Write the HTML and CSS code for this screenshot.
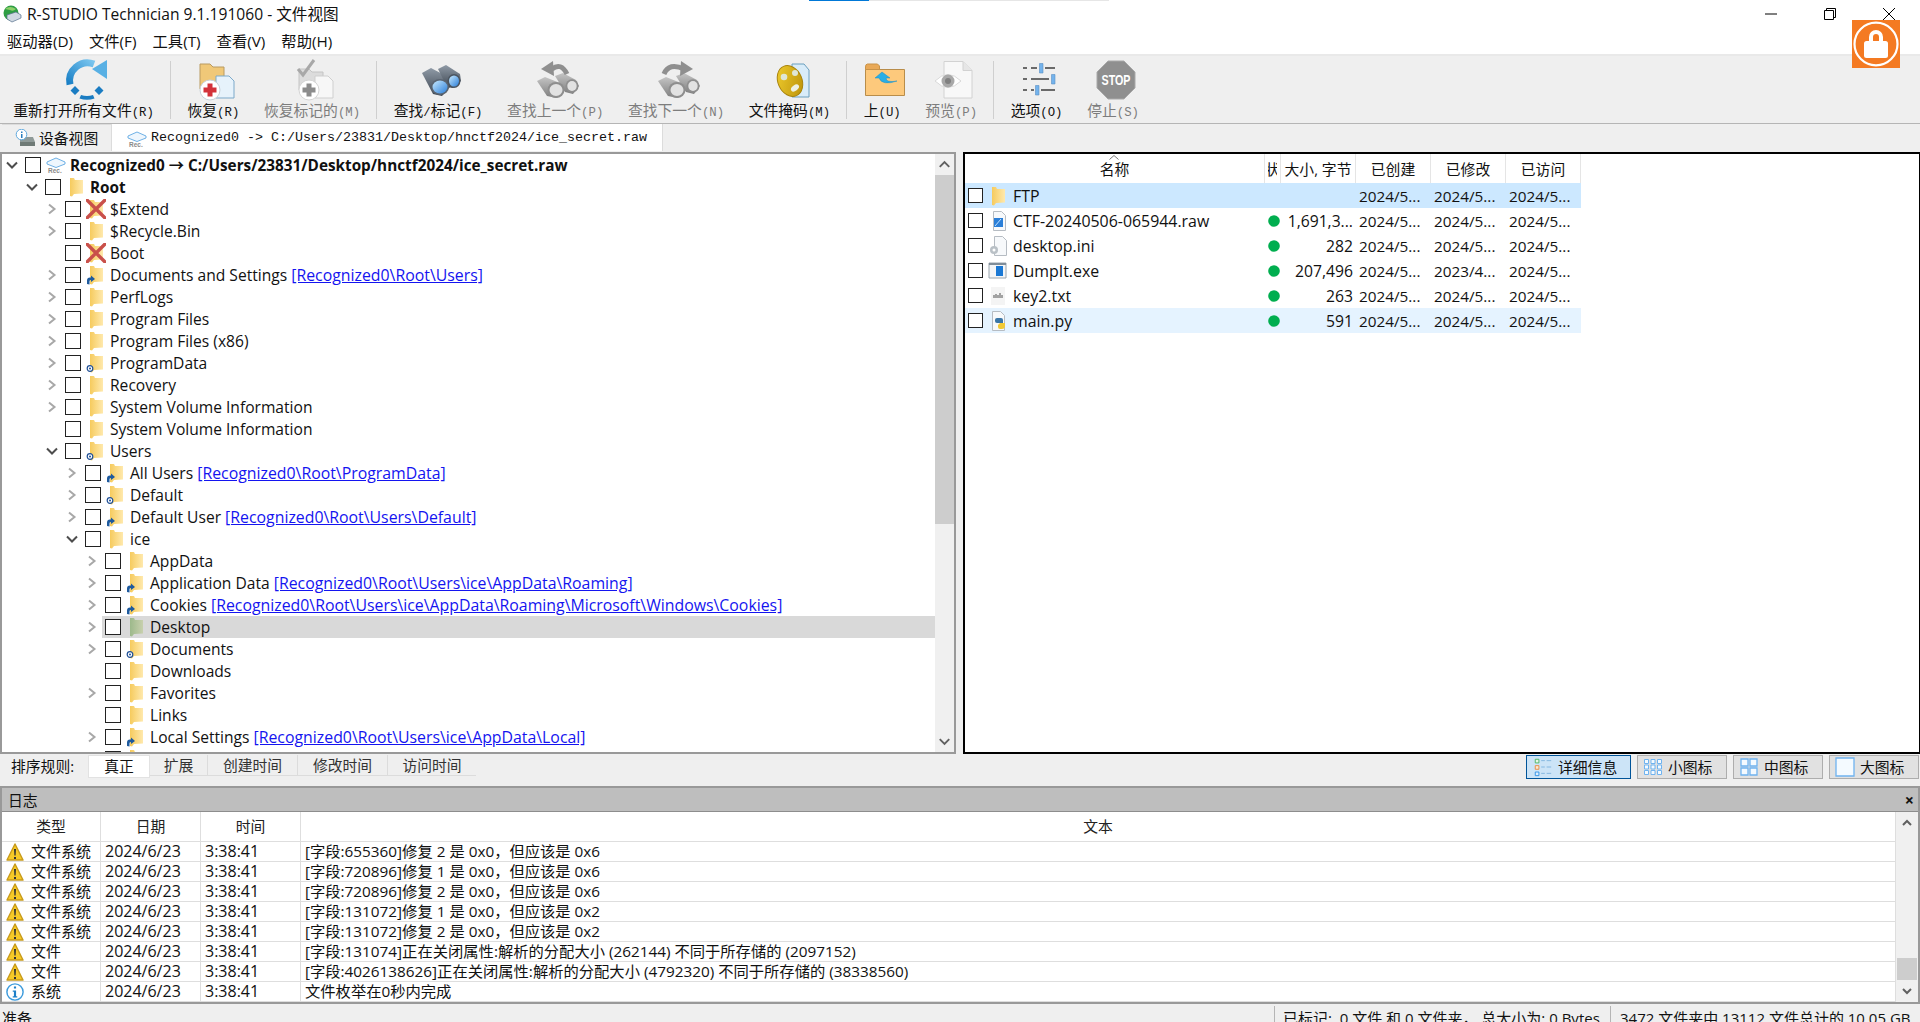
FILE: index.html
```html
<!DOCTYPE html>
<html lang="zh-CN">
<head>
<meta charset="utf-8">
<title>R-STUDIO Technician</title>
<link rel="stylesheet" href="styles.css">
</head>
<body>
<svg class="defs" width="0" height="0" aria-hidden="true">
  <defs>
    <linearGradient id="gf" x1="0" x2="1" y1="0" y2="0"><stop offset="0" stop-color="#f6cb5e"/><stop offset="1" stop-color="#ffe9ad"/></linearGradient>
    <linearGradient id="gd" x1="0" x2="1" y1="0" y2="0"><stop offset="0" stop-color="#9db98b"/><stop offset="1" stop-color="#c8d0ae"/></linearGradient>
    <linearGradient id="gb" x1="0" x2="1" y1="1" y2="0"><stop offset="0" stop-color="#1a80c6"/><stop offset="1" stop-color="#78c4ee"/></linearGradient>
    <linearGradient id="gl" x1="0" x2="1" y1="0" y2="1"><stop offset="0" stop-color="#c8eaff"/><stop offset="1" stop-color="#2b7ed8"/></linearGradient>
    <linearGradient id="gbar" x1="0" x2="0" y1="0" y2="1"><stop offset="0" stop-color="#8f9aa6"/><stop offset="1" stop-color="#3c4550"/></linearGradient>
    <linearGradient id="ggr" x1="0" x2="0" y1="0" y2="1"><stop offset="0" stop-color="#c4c4c4"/><stop offset="1" stop-color="#7e7e7e"/></linearGradient>
    <linearGradient id="gm" x1="0" x2="1" y1="0" y2="1"><stop offset="0" stop-color="#f2cf2f"/><stop offset="1" stop-color="#b98f08"/></linearGradient>
    <symbol id="chr" viewBox="0 0 16 22"><path d="M5 6.500l5.500 4.500-5.500 4.500" fill="none" stroke="#a8a8a8" stroke-width="2"/></symbol>
    <symbol id="chd" viewBox="0 0 16 22"><path d="M3 8.500l5 5 5-5" fill="none" stroke="#4d4d4d" stroke-width="2"/></symbol>
    <symbol id="folder" viewBox="0 0 20 20"><path d="M4 1h4l1 2h8v13.500l-9 .5-2 2.500-2-.5z" fill="url(#gf)"/></symbol>
    <symbol id="folderg" viewBox="0 0 20 20"><path d="M4 1h4l1 2h8v13.500l-9 .5-2 2.500-2-.5z" fill="url(#gd)"/></symbol>
    <symbol id="lnk" viewBox="0 0 20 20"><use href="#folder" width="20" height="20"/><path d="M1 19v-3.500q0-3 3-3h1v-2l4 3.500-4 3v-2h-.5q-1 0-1 1.500v3z" fill="#1e5a9e"/></symbol>
    <symbol id="tgt" viewBox="0 0 20 20"><use href="#folder" width="20" height="20"/><circle cx="4" cy="15.500" r="2.800" fill="#fff" stroke="#1e4f96" stroke-width="1.200"/><circle cx="4" cy="15.500" r="1" fill="#1e4f96"/></symbol>
    <symbol id="del" viewBox="0 0 20 20"><use href="#folder" width="20" height="20"/><path d="M0 0l20 20M20 0L0 20" stroke="#c9504a" stroke-width="3.400" fill="none"/></symbol>
    <symbol id="rec" viewBox="0 0 20 16"><path d="M1 5l9-4 9 4v2l-9 3.500L1 7z" fill="#eef6fd" stroke="#6fb1e6"/><text x="2" y="15.500" class="rec">Rec.</text></symbol>
    <symbol id="warn" viewBox="0 0 18 18"><path d="M9 1L17 17H1z" fill="#f6c927" stroke="#c79a1b" stroke-linejoin="round" stroke-width="1.400"/><path d="M8 6h2l-.4 6.500H8.400zM8 14h2v2H8z" fill="#333"/></symbol>
    <symbol id="inf" viewBox="0 0 20 20"><circle cx="10" cy="10" r="9" fill="#fff" stroke="#3d9bdc" stroke-width="1.600"/><path d="M8.800 4h2.400v2.200H8.800zM7.500 8.300h3.700v6.500h1.300v1.400H7.500v-1.400h1.300V9.700H7.500z" fill="#1d80c8"/></symbol>
    <symbol id="dotg" viewBox="0 0 12 12"><circle cx="6" cy="6" r="5.800" fill="#00ae4f"/></symbol>
    <symbol id="docb" viewBox="0 0 16 20"><path d="M2.500 .5h8l4 4v15h-12z" fill="#f7f9fb" stroke="#b6bcc3"/></symbol>
    <symbol id="bino" viewBox="0 0 48 46"><path d="M5 17l9-5 17 9 2 10-8 9-9-2z" fill="url(#gbar)"/><path d="M21 13l8-4 14 9 1 7-8 7-6-1z" fill="url(#gbar)"/><ellipse cx="23" cy="31" rx="9" ry="8" fill="#5a6470"/><ellipse cx="23" cy="31" rx="7.500" ry="6.500" fill="url(#gl)"/><ellipse cx="37" cy="25" rx="6.500" ry="7" fill="#4b5560"/><ellipse cx="37" cy="25" rx="5" ry="5.500" fill="url(#gl)"/></symbol>
    <symbol id="binog" viewBox="0 0 48 46"><path d="M3 25l8-4 15 6 5 7-8 8-10-2z" fill="url(#ggr)"/><path d="M21 20l8-3 13 7 3 6-6 8-8-2z" fill="url(#ggr)"/><ellipse cx="22" cy="34" rx="8.500" ry="8" fill="#8e8e8e"/><ellipse cx="22" cy="34" rx="6.500" ry="6" fill="#e2e2e2"/><ellipse cx="38" cy="30" rx="6.500" ry="6.800" fill="#8e8e8e"/><ellipse cx="38" cy="30" rx="4.700" ry="5" fill="#e2e2e2"/></symbol>
  </defs>
</svg>

<div class="progress"></div>

<header class="titlebar">
  <svg class="appicon" viewBox="0 0 20 18"><circle cx="9" cy="8" r="7.500" fill="#2e9d44"/><path d="M3 4q5-4 11 0-3 3-6 1z" fill="#8fd06a"/><path d="M5 10l9-3 5 3v3l-9 4-5-3z" fill="#cfd8e2" stroke="#56708c" stroke-width=".7"/></svg>
  <span class="apptitle">R-STUDIO Technician 9.1.191060 - 文件视图</span>
  <div class="winctl">
    <svg class="wc" viewBox="0 0 14 14"><path d="M1 7h12" stroke="#000" fill="none"/></svg>
    <svg class="wc" viewBox="0 0 14 14"><path d="M1.500 3.500h9v9h-9zM3.500 3.500v-2h9v9h-2" stroke="#000" fill="none"/></svg>
    <svg class="wc" viewBox="0 0 14 14"><path d="M1 1l12 12M13 1L1 13" stroke="#000" fill="none"/></svg>
  </div>
</header>

<svg class="lock" viewBox="0 0 48 48"><rect width="48" height="48" fill="#f47a22"/><ellipse cx="24" cy="24" rx="21.500" ry="21.300" fill="none" stroke="#fff" stroke-width="2.200"/><path d="M17 22v-5a7 7 0 0 1 14 0v5h-4v-5a3 3 0 0 0-6 0v5z" fill="#fff"/><rect x="12" y="21" width="24" height="17" rx="2.500" fill="#fff"/></svg>

<nav class="menubar">
  <span>驱动器(D)</span><span>文件(F)</span><span>工具(T)</span><span>查看(V)</span><span>帮助(H)</span>
</nav>

<section class="toolbar">
  <div class="tool">
    <svg class="ticon" viewBox="0 0 48 46"><path d="M7 28.500A18 18 0 0 1 31 8" fill="none" stroke="url(#gb)" stroke-width="7"/><path d="M44 4v19L29 13z" fill="#58b0e4"/><path d="M12 30l4.500 4.500-4.500 4.500-4.500-4.500zM36 30l4.500 4.500-4.500 4.500-4.500-4.500z" fill="#1a7cc2"/><path d="M18 39q6 2 12 0l1.500 3.500q-7.500 2.500-15 0z" fill="#1a7cc2"/></svg>
    <span class="tlabel">重新打开所有文件<span class="a">(R)</span></span>
  </div>
  <i class="tsep"></i>
  <div class="tool">
    <svg class="ticon" viewBox="0 0 48 46"><path d="M8 8h10l3 3h11v22H8z" fill="#f0c878" stroke="#b99a60"/><path d="M24 20h13l5 5v17H24z" fill="#e6f2fb" stroke="#7da9c9"/><circle cx="18" cy="34" r="10" fill="#fff" stroke="#c9d2da"/><path d="M15.500 27.500h5v4h4v5h-4v4h-5v-4h-4v-5h4z" fill="#d3323a"/></svg>
    <span class="tlabel">恢复<span class="a">(R)</span></span>
  </div>
  <div class="tool dim">
    <svg class="ticon" viewBox="0 0 48 46"><path d="M8 13h10l3 3h11v18H8z" fill="#dcdcdc" stroke="#c4c4c4"/><path d="M7 13l5 6 11-15" fill="none" stroke="#a8a8a8" stroke-width="3"/><path d="M24 20h13l5 5v17H24z" fill="#f7f7f7" stroke="#cfcfcf"/><circle cx="18" cy="34" r="10" fill="#fff" stroke="#d5d5d5"/><path d="M15.500 27.500h5v4h4v5h-4v4h-5v-4h-4v-5h4z" fill="#8c8c8c"/></svg>
    <span class="tlabel">恢复标记的<span class="a">(M)</span></span>
  </div>
  <i class="tsep"></i>
  <div class="tool">
    <svg class="ticon"><use href="#bino"/></svg>
    <span class="tlabel">查找<span class="a">/</span>标记<span class="a">(F)</span></span>
  </div>
  <div class="tool dim">
    <svg class="ticon" viewBox="0 0 48 46"><use href="#binog" width="48" height="46"/><path d="M18 13q9-7 15 5" fill="none" stroke="#8f8f8f" stroke-width="5"/><path d="M7 13l12-8 1 15z" fill="#8f8f8f"/></svg>
    <span class="tlabel">查找上一个<span class="a">(P)</span></span>
  </div>
  <div class="tool dim">
    <svg class="ticon" viewBox="0 0 48 46"><use href="#binog" width="48" height="46"/><path d="M9 18q5-12 20-5" fill="none" stroke="#8f8f8f" stroke-width="5"/><path d="M38 13l-12-8-1 15z" fill="#8f8f8f"/></svg>
    <span class="tlabel">查找下一个<span class="a">(N)</span></span>
  </div>
  <div class="tool">
    <svg class="ticon" viewBox="0 0 48 46"><path d="M24 8h12l5 6v27H24z" fill="#d9ecf9" stroke="#6a9fbe"/><ellipse cx="22" cy="25" rx="12" ry="16" transform="rotate(-24 22 25)" fill="url(#gm)" stroke="#a8830c"/><circle cx="16" cy="21" r="3.300" fill="#dfe6d6"/><circle cx="27" cy="17" r="3" fill="#dfe6d6"/><ellipse cx="27" cy="32" rx="4.500" ry="2.800" transform="rotate(-36 27 32)" fill="#eef0e2"/></svg>
    <span class="tlabel">文件掩码<span class="a">(M)</span></span>
  </div>
  <i class="tsep"></i>
  <div class="tool">
    <svg class="ticon" viewBox="0 0 48 46"><path d="M4.500 13.500h39v26h-39z" fill="#fdc97c" stroke="#b98d4a"/><path d="M4.500 11q0-3 2-3h10l2 2v3.500h-14z" fill="#e9a957" stroke="#c99348"/><path d="M21 16l-7 6h4q3 8 18 3-11 2-11-3h4z" fill="#29aee6" stroke="#1a8fc7" stroke-width=".5"/></svg>
    <span class="tlabel">上<span class="a">(U)</span></span>
  </div>
  <div class="tool dim">
    <svg class="ticon" viewBox="0 0 48 46"><path d="M14 5.500h19l9 9v27.500H14z" fill="#f8f8f8" stroke="#d2d2d2"/><path d="M33 5.500v9h9" fill="#e6e6e6" stroke="#d2d2d2"/><path d="M5 25q13-13 26 0-13 13-26 0z" fill="#fff" stroke="#d8d8d8"/><circle cx="18" cy="25" r="6.500" fill="#a8a8a8"/><circle cx="18" cy="25" r="3" fill="#808080"/></svg>
    <span class="tlabel">预览<span class="a">(P)</span></span>
  </div>
  <i class="tsep"></i>
  <div class="tool">
    <svg class="ticon" viewBox="0 0 48 46"><path d="M7 12h4M15 12h6M29 12h10M7 23h4M15 23h18M7 34h4M15 34h3M25 34h14" stroke="#6a6a6a" stroke-width="2.200" fill="none"/><path d="M23.500 7.500h3.500v9.500h-3.500zM35.500 18.500h3.500V28h-3.500zM19.500 29.500H23V39h-3.500z" fill="#74b3ec" stroke="#5a90c4" stroke-width=".6"/></svg>
    <span class="tlabel">选项<span class="a">(O)</span></span>
  </div>
  <div class="tool dim">
    <svg class="ticon" viewBox="0 0 48 46"><path d="M16 5h16l11 11v16L32 43H16L5 32V16z" fill="#8f8f8f" stroke="#a9a9a9"/><text x="24" y="29" class="stop" textLength="29" lengthAdjust="spacingAndGlyphs">STOP</text></svg>
    <span class="tlabel">停止<span class="a">(S)</span></span>
  </div>
</section>

<div class="doctabs">
  <div class="dtab">
    <svg class="dtabicon" viewBox="0 0 20 18"><path d="M5 8h13l2 5v4H5z" fill="#8f9a98"/><path d="M5 13h15v4H5z" fill="#6f7a76"/><circle cx="6.500" cy="5.500" r="5.300" fill="#fff" stroke="#5ea8de"/><path d="M6 2.500h1.500V4H6zM6 5h1.500v4H6z" fill="#2a7fc1"/></svg>
    <span class="dtabname">设备视图</span>
  </div>
  <div class="dtab on">
    <svg class="recicon"><use href="#rec"/></svg>
    <span class="mono">Recognized0 -&gt; C:/Users/23831/Desktop/hnctf2024/ice_secret.raw</span>
  </div>
</div>

<main class="workspace">
  <section class="tree">
    <div class="rows">
      <div class="row l0 bold"><svg class="chev"><use href="#chd"/></svg><div class="body"><i class="cb"></i><svg class="rowrec"><use href="#rec"/></svg><span>Recognized0 → C:/Users/23831/Desktop/hnctf2024/ice_secret.raw</span></div></div>
      <div class="row l1 bold"><svg class="chev"><use href="#chd"/></svg><div class="body"><i class="cb"></i><svg class="ic"><use href="#folder"/></svg><span>Root</span></div></div>
      <div class="row l2"><svg class="chev"><use href="#chr"/></svg><div class="body"><i class="cb"></i><svg class="ic"><use href="#del"/></svg><span>$Extend</span></div></div>
      <div class="row l2"><svg class="chev"><use href="#chr"/></svg><div class="body"><i class="cb"></i><svg class="ic"><use href="#folder"/></svg><span>$Recycle.Bin</span></div></div>
      <div class="row l2"><span class="chev"></span><div class="body"><i class="cb"></i><svg class="ic"><use href="#del"/></svg><span>Boot</span></div></div>
      <div class="row l2"><svg class="chev"><use href="#chr"/></svg><div class="body"><i class="cb"></i><svg class="ic"><use href="#lnk"/></svg><span>Documents and Settings <a>[Recognized0\Root\Users]</a></span></div></div>
      <div class="row l2"><svg class="chev"><use href="#chr"/></svg><div class="body"><i class="cb"></i><svg class="ic"><use href="#folder"/></svg><span>PerfLogs</span></div></div>
      <div class="row l2"><svg class="chev"><use href="#chr"/></svg><div class="body"><i class="cb"></i><svg class="ic"><use href="#folder"/></svg><span>Program Files</span></div></div>
      <div class="row l2"><svg class="chev"><use href="#chr"/></svg><div class="body"><i class="cb"></i><svg class="ic"><use href="#folder"/></svg><span>Program Files (x86)</span></div></div>
      <div class="row l2"><svg class="chev"><use href="#chr"/></svg><div class="body"><i class="cb"></i><svg class="ic"><use href="#tgt"/></svg><span>ProgramData</span></div></div>
      <div class="row l2"><svg class="chev"><use href="#chr"/></svg><div class="body"><i class="cb"></i><svg class="ic"><use href="#folder"/></svg><span>Recovery</span></div></div>
      <div class="row l2"><svg class="chev"><use href="#chr"/></svg><div class="body"><i class="cb"></i><svg class="ic"><use href="#folder"/></svg><span>System Volume Information</span></div></div>
      <div class="row l2"><span class="chev"></span><div class="body"><i class="cb"></i><svg class="ic"><use href="#folder"/></svg><span>System Volume Information</span></div></div>
      <div class="row l2"><svg class="chev"><use href="#chd"/></svg><div class="body"><i class="cb"></i><svg class="ic"><use href="#tgt"/></svg><span>Users</span></div></div>
      <div class="row l3"><svg class="chev"><use href="#chr"/></svg><div class="body"><i class="cb"></i><svg class="ic"><use href="#lnk"/></svg><span>All Users <a>[Recognized0\Root\ProgramData]</a></span></div></div>
      <div class="row l3"><svg class="chev"><use href="#chr"/></svg><div class="body"><i class="cb"></i><svg class="ic"><use href="#tgt"/></svg><span>Default</span></div></div>
      <div class="row l3"><svg class="chev"><use href="#chr"/></svg><div class="body"><i class="cb"></i><svg class="ic"><use href="#lnk"/></svg><span>Default User <a>[Recognized0\Root\Users\Default]</a></span></div></div>
      <div class="row l3"><svg class="chev"><use href="#chd"/></svg><div class="body"><i class="cb"></i><svg class="ic"><use href="#folder"/></svg><span>ice</span></div></div>
      <div class="row l4"><svg class="chev"><use href="#chr"/></svg><div class="body"><i class="cb"></i><svg class="ic"><use href="#folder"/></svg><span>AppData</span></div></div>
      <div class="row l4"><svg class="chev"><use href="#chr"/></svg><div class="body"><i class="cb"></i><svg class="ic"><use href="#lnk"/></svg><span>Application Data <a>[Recognized0\Root\Users\ice\AppData\Roaming]</a></span></div></div>
      <div class="row l4"><svg class="chev"><use href="#chr"/></svg><div class="body"><i class="cb"></i><svg class="ic"><use href="#lnk"/></svg><span>Cookies <a>[Recognized0\Root\Users\ice\AppData\Roaming\Microsoft\Windows\Cookies]</a></span></div></div>
      <div class="row l4"><svg class="chev"><use href="#chr"/></svg><div class="body sel"><i class="cb"></i><svg class="ic"><use href="#folderg"/></svg><span>Desktop</span></div></div>
      <div class="row l4"><svg class="chev"><use href="#chr"/></svg><div class="body"><i class="cb"></i><svg class="ic"><use href="#tgt"/></svg><span>Documents</span></div></div>
      <div class="row l4"><span class="chev"></span><div class="body"><i class="cb"></i><svg class="ic"><use href="#folder"/></svg><span>Downloads</span></div></div>
      <div class="row l4"><svg class="chev"><use href="#chr"/></svg><div class="body"><i class="cb"></i><svg class="ic"><use href="#folder"/></svg><span>Favorites</span></div></div>
      <div class="row l4"><span class="chev"></span><div class="body"><i class="cb"></i><svg class="ic"><use href="#folder"/></svg><span>Links</span></div></div>
      <div class="row l4"><svg class="chev"><use href="#chr"/></svg><div class="body"><i class="cb"></i><svg class="ic"><use href="#lnk"/></svg><span>Local Settings <a>[Recognized0\Root\Users\ice\AppData\Local]</a></span></div></div>
      <div class="row l4"><span class="chev"></span><div class="body"><i class="cb"></i><svg class="ic"><use href="#folder"/></svg></div></div>
    </div>
    <div class="sbar">
      <svg class="sarrow" viewBox="0 0 20 21"><path d="M5 13l5-5 5 5" fill="none" stroke="#606060" stroke-width="2"/></svg>
      <div class="sthumb"></div>
      <div class="sfill"></div>
      <svg class="sarrow" viewBox="0 0 20 21"><path d="M5 8l5 5 5-5" fill="none" stroke="#606060" stroke-width="2"/></svg>
    </div>
  </section>

  <section class="files">
    <div class="fhead">
      <div class="fh fname"><svg class="sortup" viewBox="0 0 10 5"><path d="M.5 4.500L5 .5l4.500 4" fill="none" stroke="#777"/></svg>名称</div>
      <div class="fh"><span class="fclip">状</span></div>
      <div class="fh">大小, 字节</div>
      <div class="fh">已创建</div>
      <div class="fh">已修改</div>
      <div class="fh">已访问</div>
    </div>
    <div class="frow hi1">
      <div class="fcell fn"><i class="cb"></i><svg class="fic" viewBox="0 0 20 20"><use href="#folder" width="20" height="20"/></svg>FTP</div><div></div><div></div>
      <div class="fcell">2024/5...</div><div class="fcell">2024/5...</div><div class="fcell">2024/5...</div>
    </div>
    <div class="frow">
      <div class="fcell fn"><i class="cb"></i><svg class="fic" viewBox="0 0 20 20"><use href="#docb" x="3" width="16" height="20"/><path d="M6 7h9v9H6z" fill="#2b7fd8"/><path d="M7 15l6-7" stroke="#bfe0ff"/></svg>CTF-20240506-065944.raw</div><div class="fdot"><svg class="dot"><use href="#dotg"/></svg></div><div class="fcell num">1,691,3...</div>
      <div class="fcell">2024/5...</div><div class="fcell">2024/5...</div><div class="fcell">2024/5...</div>
    </div>
    <div class="frow">
      <div class="fcell fn"><i class="cb"></i><svg class="fic" viewBox="0 0 20 20"><use href="#docb" x="4" width="16" height="20"/><circle cx="6" cy="14" r="4" fill="#b9c0c6"/><circle cx="6" cy="14" r="1.500" fill="#fff"/></svg>desktop.ini</div><div class="fdot"><svg class="dot"><use href="#dotg"/></svg></div><div class="fcell num">282</div>
      <div class="fcell">2024/5...</div><div class="fcell">2024/5...</div><div class="fcell">2024/5...</div>
    </div>
    <div class="frow">
      <div class="fcell fn"><i class="cb"></i><svg class="fic" viewBox="0 0 20 20"><path d="M1 2h17v15H1z" fill="#f3f5f7" stroke="#9aa5ae"/><path d="M1 2h17v2H1z" fill="#7f8d99"/><path d="M8 5h7v10H8z" fill="#1a78d4"/></svg>DumpIt.exe</div><div class="fdot"><svg class="dot"><use href="#dotg"/></svg></div><div class="fcell num">207,496</div>
      <div class="fcell">2024/5...</div><div class="fcell">2023/4...</div><div class="fcell">2024/5...</div>
    </div>
    <div class="frow">
      <div class="fcell fn"><i class="cb"></i><svg class="fic" viewBox="0 0 20 20"><path d="M3 1h14v18H3z" fill="#f4f4f4"/><path d="M6 9v3M8 8v4M10 9v3M12 7v5M14 9v3" stroke="#777" stroke-width="1.300"/></svg>key2.txt</div><div class="fdot"><svg class="dot"><use href="#dotg"/></svg></div><div class="fcell num">263</div>
      <div class="fcell">2024/5...</div><div class="fcell">2024/5...</div><div class="fcell">2024/5...</div>
    </div>
    <div class="frow hi2">
      <div class="fcell fn"><i class="cb"></i><svg class="fic" viewBox="0 0 20 20"><use href="#docb" x="2" width="16" height="20"/><path d="M9 7h4q2 0 2 2v3H9q-2 0-2-2V9q0-2 2-2z" fill="#3a76a8"/><path d="M12 12h5v3q0 3-3 3h-2q-2 0-2-2v-2z" fill="#f2c935"/></svg>main.py</div><div class="fdot"><svg class="dot"><use href="#dotg"/></svg></div><div class="fcell num">591</div>
      <div class="fcell">2024/5...</div><div class="fcell">2024/5...</div><div class="fcell">2024/5...</div>
    </div>
  </section>
</main>

<div class="sortbar">
  <span class="sortlabel">排序规则:</span>
  <div class="stab on">真正</div>
  <div class="stab w58">扩展</div>
  <div class="stab">创建时间</div>
  <div class="stab">修改时间</div>
  <div class="stab last">访问时间</div>
  <div class="views">
    <div class="vbtn on w105"><svg class="vic" viewBox="0 0 20 22"><path d="M1.500 2.500h4v4h-4z" fill="#e7f6e7" stroke="#49b55f"/><path d="M1.500 9.500h4v4h-4z" fill="#fbe9d4" stroke="#e98a3c"/><path d="M1.500 16.500h4v4h-4z" fill="#dceefe" stroke="#2c8fe6"/><path d="M8 4h4M14 4h5M8 11h4M14 11h5M8 18h4M14 18h5" stroke="#7fb4de"/></svg>详细信息</div>
    <div class="vbtn"><svg class="vic" viewBox="0 0 20 18"><path d="M1.500 1.500h4v4h-4zM8 1.500h4v4H8zM14.500 1.500h4v4h-4zM1.500 7h4v4h-4zM8 7h4v4H8zM14.500 7h4v4h-4zM1.500 12.500h4v4h-4zM8 12.500h4v4H8zM14.500 12.500h4v4h-4z" fill="#f4faff" stroke="#6fb3f0"/></svg>小图标</div>
    <div class="vbtn"><svg class="vic" viewBox="0 0 20 20"><path d="M2 2h7v7H2zM11 2h7v7h-7zM2 11h7v7H2zM11 11h7v7h-7z" fill="#f4faff" stroke="#6fb3f0" stroke-width="1.300"/></svg>中图标</div>
    <div class="vbtn"><svg class="vic" viewBox="0 0 20 20"><path d="M1 1h18v18H1z" fill="#f4faff" stroke="#6fb3f0" stroke-width="1.300"/></svg>大图标</div>
  </div>
</div>

<section class="log">
  <div class="loghead"><span>日志</span><span class="logx">×</span></div>
  <div class="logmain">
    <div class="logtable">
      <div class="lrow lhead"><div>类型</div><div>日期</div><div>时间</div><div>文本</div></div>
      <div class="lrow"><div class="lt"><svg class="li"><use href="#warn"/></svg>文件系统</div><div>2024/6/23</div><div>3:38:41</div><div>[字段:655360]修复 2 是 0x0，但应该是 0x6</div></div>
      <div class="lrow"><div class="lt"><svg class="li"><use href="#warn"/></svg>文件系统</div><div>2024/6/23</div><div>3:38:41</div><div>[字段:720896]修复 1 是 0x0，但应该是 0x6</div></div>
      <div class="lrow"><div class="lt"><svg class="li"><use href="#warn"/></svg>文件系统</div><div>2024/6/23</div><div>3:38:41</div><div>[字段:720896]修复 2 是 0x0，但应该是 0x6</div></div>
      <div class="lrow"><div class="lt"><svg class="li"><use href="#warn"/></svg>文件系统</div><div>2024/6/23</div><div>3:38:41</div><div>[字段:131072]修复 1 是 0x0，但应该是 0x2</div></div>
      <div class="lrow"><div class="lt"><svg class="li"><use href="#warn"/></svg>文件系统</div><div>2024/6/23</div><div>3:38:41</div><div>[字段:131072]修复 2 是 0x0，但应该是 0x2</div></div>
      <div class="lrow"><div class="lt"><svg class="li"><use href="#warn"/></svg>文件</div><div>2024/6/23</div><div>3:38:41</div><div>[字段:131074]正在关闭属性:解析的分配大小 (262144) 不同于所存储的 (2097152)</div></div>
      <div class="lrow"><div class="lt"><svg class="li"><use href="#warn"/></svg>文件</div><div>2024/6/23</div><div>3:38:41</div><div>[字段:4026138626]正在关闭属性:解析的分配大小 (4792320) 不同于所存储的 (38338560)</div></div>
      <div class="lrow"><div class="lt"><svg class="li"><use href="#inf"/></svg>系统</div><div>2024/6/23</div><div>3:38:41</div><div>文件枚举在0秒内完成</div></div>
    </div>
    <div class="lbar">
      <svg class="larrow" viewBox="0 0 22 20"><path d="M7 12l4-4 4 4" fill="none" stroke="#606060" stroke-width="2"/></svg>
      <div class="lfill"></div>
      <div class="lthumb"></div>
      <svg class="larrow" viewBox="0 0 22 20"><path d="M7 8l4 4 4-4" fill="none" stroke="#606060" stroke-width="2"/></svg>
    </div>
  </div>
</section>

<footer class="status">
  <span class="st1">准备</span>
  <span class="st2">已标记:&nbsp; 0 文件 和 0 文件夹，&nbsp;总大小为: 0 Bytes</span>
  <span class="st3">3472 文件夹中 13112 文件总计的 10.05 GB</span>
</footer>
</body>
</html>
```

FILE: styles.css
```css
* { box-sizing: border-box; }
html, body { margin: 0; height: 100%; }
body {
  width: 1920px; height: 1022px; overflow: hidden; position: relative;
  display: flex; flex-direction: column;
  background: #efefef; color: #111;
  font: 15px/20px "Open Sans", "Noto Sans CJK SC", sans-serif;
}
.defs { position: absolute; }
.progress {
  position: absolute; left: 809px; top: 0; width: 300px; height: 1px;
  background: linear-gradient(90deg, #0078d7 60px, #e6e6e6 60px);
}
.titlebar { height: 30px; background: #fff; display: flex; align-items: center; padding: 0 0 2px 2px; flex: none; }
.appicon { width: 20px; height: 18px; margin-right: 5px; }
.apptitle { font-size: 15.600px; }
.winctl { margin-left: auto; display: flex; margin-right: 24px; gap: 45px; margin-top: -1px; }
.wc { width: 14px; height: 14px; display: block; }
.lock { position: absolute; left: 1852px; top: 20px; width: 48px; height: 48px; }
.menubar { height: 24px; background: #fff; display: flex; padding-left: 7px; gap: 16px; line-height: 22px; font-size: 15.300px; flex: none; }
.toolbar {
  height: 70px; flex: none; display: flex; background: #efefef; padding-left: 1px;
  border-top: 2px solid #e9e9e9; border-bottom: 1px solid #b5b5b5;
}
.tool { display: flex; flex-direction: column; align-items: center; padding: 0 12.300px; }
.ticon { width: 48px; height: 46px; margin: 0 -13px -1px -7px; flex: none; }
.tlabel { font-size: 14.800px; line-height: 18px; white-space: nowrap; color: #111; }
.a { font-family: "Liberation Mono", monospace; font-size: 12.330px; }
.dim .tlabel { color: #7d7d7d; }
.tsep { width: 1px; height: 58px; background: #cfcfcf; margin: 5px 4px 0; flex: none; }
.doctabs { height: 28px; flex: none; display: flex; padding-left: 2px; }
.dtab { display: flex; align-items: center; height: 27px; padding-left: 13px; width: 110px; border-right: 1px solid #dcdcdc; border-top: 1px solid #dcdcdc; }
.dtab.on { width: 551px; background: #fff; padding-left: 15px; border-top: 0; }
.dtabicon { width: 20px; height: 18px; margin-right: 4px; }
.dtabname { font-size: 14.800px; }
.recicon { width: 20px; height: 16px; margin-right: 4px; margin-top: 3px; }
.mono { font: 13.330px/20px "Liberation Mono", monospace; white-space: nowrap; }
.rec { font: bold 6.500px "Liberation Sans", sans-serif; fill: #8a8a8a; }
.workspace { height: 602px; flex: none; display: flex; }
.tree { width: 956px; border: 2px solid #999; display: flex; background: #fff; overflow: hidden; flex: none; }
.rows { flex: 1; min-width: 0; overflow: hidden; }
.row { height: 22px; display: flex; line-height: 22px; white-space: nowrap; font-size: 15.600px; }
.l0 { padding-left: 2px; }
.l1 { padding-left: 22px; }
.l2 { padding-left: 42px; }
.l3 { padding-left: 62px; }
.l4 { padding-left: 82px; }
.bold { font-weight: 700; font-size: 15.300px; }
.chev { width: 16px; height: 22px; flex: none; display: block; }
.body { flex: 1; display: flex; align-items: center; margin-left: 2px; padding-left: 3px; height: 22px; }
.sel { background: #d9d9d9; }
.cb { width: 16px; height: 16px; border: 1px solid #222; background: #fff; flex: none; display: block; }
.ic { width: 20px; height: 20px; margin: 0 4px 0 5px; flex: none; }
.rowrec { width: 20px; height: 16px; margin: 0 4px 0 5px; flex: none; }
a { color: #1414f0; text-decoration: underline; font-size: 15.850px; }
.sbar { width: 19px; background: #f0f0f0; display: flex; flex-direction: column; flex: none; }
.sarrow { width: 19px; height: 21px; flex: none; }
.sthumb { height: 349px; background: #cdcdcd; flex: none; }
.sfill { flex: 1; }
.files { width: 957px; margin-left: 7px; border: 2px solid #000; border-right-width: 1px; background: #fff; flex: none; }
.fhead, .frow { display: grid; grid-template-columns: 300px 16px 75px 75px 75px 75px; width: 616px; }
.fhead { height: 29px; }
.fh { position: relative; display: flex; align-items: center; justify-content: center; border-right: 1px solid #e5e5e5; white-space: nowrap; font-size: 14.800px; }
.fclip { display: block; width: 9px; overflow: hidden; text-indent: -3px; }
.sortup { position: absolute; left: 144px; top: 1px; width: 10px; height: 5px; }
.frow { height: 25px; align-items: center; }
.hi1 { background: #cce8ff; }
.hi2 { background: #e5f3ff; }
.fcell { padding-left: 3px; white-space: nowrap; font-size: 15.300px; }
.fn { display: flex; align-items: center; padding-left: 3px; font-size: 15.900px; }
.fn .cb { width: 15px; height: 15px; }
.fic { width: 20px; height: 20px; margin: 0 5px 0 5px; flex: none; }
.num { text-align: right; padding-right: 3px; padding-left: 2px; font-size: 15.700px; }
.fdot { display: flex; justify-content: center; padding-left: 2px; }
.dot { width: 12px; height: 12px; display: block; }
.sortbar { height: 32px; flex: none; display: flex; align-items: flex-start; padding-top: 1px; }
.sortlabel { width: 88px; padding-left: 11px; line-height: 22px; font-size: 14.800px; flex: none; }
.stab { width: 90px; height: 21px; line-height: 21px; text-align: center; font-size: 14.800px; border-right: 1px solid #dcdcdc; border-bottom: 1px solid #dcdcdc; color: #333; flex: none; }
.stab.on { width: 62px; height: 23px; background: #fff; border: 1px solid #e2e2e2; color: #111; }
.stab.w58 { width: 58px; }
.stab.last { width: 88px; border-right: 0; }
.views { margin-left: auto; display: flex; gap: 6px; padding-right: 1px; }
.vbtn { width: 90px; height: 24px; display: flex; align-items: center; padding-left: 5px; background: #e1e1e1; border: 1px solid #adadad; font-size: 14.800px; gap: 5px; }
.vbtn.on { background: #cce4f7; border-color: #005499; }
.vbtn.w105 { width: 105px; padding-left: 6px; }
.vic { width: 20px; height: 20px; flex: none; }
.log { height: 218px; flex: none; border: 2px solid #999; display: flex; flex-direction: column; background: #fff; }
.loghead { height: 24px; flex: none; background: #bebebe; border-bottom: 1px solid #8d8d8d; display: flex; justify-content: space-between; align-items: center; padding: 0 4px 0 6px; font-size: 14.800px; }
.logx { font-weight: 700; font-size: 16px; }
.logmain { flex: 1; display: flex; min-height: 0; }
.logtable { flex: 1; min-width: 0; }
.lrow { display: grid; grid-template-columns: 99px 100px 100px 1fr; height: 20px; border-bottom: 1px solid #dedede; line-height: 19px; font-size: 16px; white-space: nowrap; }
.lrow > div { padding-left: 4px; border-right: 1px solid #dedede; }
.lrow > div:last-child { font-size: 15.300px; }
.lrow > .lt { display: flex; align-items: center; padding-left: 3px; gap: 6px; font-size: 15px; }
.lhead { height: 30px; line-height: 29px; }
.lrow.lhead > div { padding: 0; text-align: center; color: #222; font-size: 14.800px; }
.li { width: 20px; height: 18px; flex: none; display: block; }
.lbar { width: 22px; background: #f0f0f0; display: flex; flex-direction: column; flex: none; }
.larrow { width: 22px; height: 20px; flex: none; margin: 1px 0; }
.lfill { flex: 1; }
.lthumb { height: 22px; background: #cdcdcd; margin: 0 1px; flex: none; }
.status { height: 18px; flex: none; display: flex; overflow: hidden; line-height: 24px; padding-top: 2px; font-size: 15px; white-space: nowrap; }
.st1 { flex: 1; padding-left: 2px; }
.st2 { width: 336px; padding-left: 8px; border-left: 1px solid #b5b5b5; }
.st3 { width: 310px; padding-left: 9px; border-left: 1px solid #b5b5b5; }
.stop { font: bold 14px "Liberation Sans", sans-serif; fill: #fff; text-anchor: middle; }
```
